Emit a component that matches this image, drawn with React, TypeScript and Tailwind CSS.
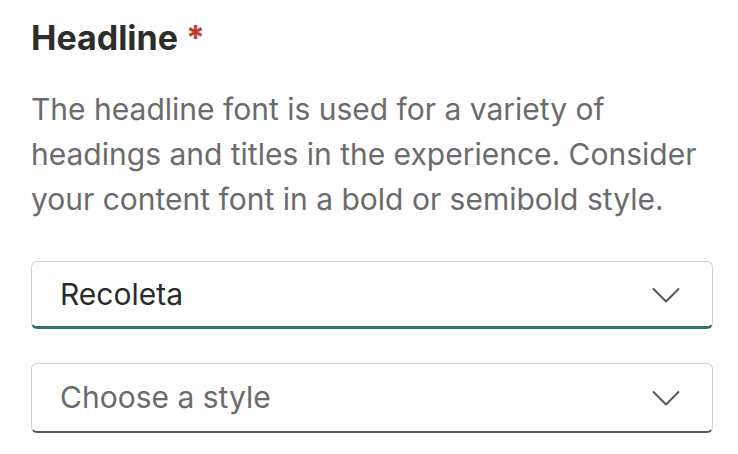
import React from 'react';

const Chevron: React.FC = () => (
  <svg width="28" height="17" viewBox="0 0 28 17" fill="none" className="shrink-0 mt-[2px]">
    <path d="M1.5 2 L14 14.5 L26.5 2" stroke="#555555" strokeWidth="2" strokeLinecap="round" strokeLinejoin="round" />
  </svg>
);

const SelectBox: React.FC<{ value: string; placeholder?: boolean; className: string }> = ({ value, placeholder, className }) => (
  <div
    className={`flex items-center justify-between pl-[28px] pr-[32px] bg-white rounded-[6px] border border-[#cfcfcf] ${className}`}
  >
    <span className={`text-[30px] ${placeholder ? 'text-[#6b6b6b]' : 'text-[#2b2b2b]'}`}>{value}</span>
    <Chevron />
  </div>
);

const App: React.FC = () => {
  return (
    <div className="w-[738px] h-[454px] bg-white font-['Inter',sans-serif] px-[31px] pt-[18px]">
      <h2 className="text-[34px] font-bold text-[#2d2d2d] leading-[40px]">
        Headline <span className="text-[#c8372d]">*</span>
      </h2>
      <p className="mt-[29px] text-[30px] leading-[45px] text-[#6b6b6b]">
        The headline font is used for a variety of headings and titles in the experience. Consider your content font in a bold or semibold style.
      </p>
      <div className="mt-[39px] w-[682px] flex flex-col gap-[34px]">
        <SelectBox value="Recoleta" className="h-[68px] border-b-[3px] border-b-[#2f7473]" />
        <SelectBox value="Choose a style" placeholder className="h-[70px] border-b-2 border-b-[#555555]" />
      </div>
    </div>
  );
};

export default App;
